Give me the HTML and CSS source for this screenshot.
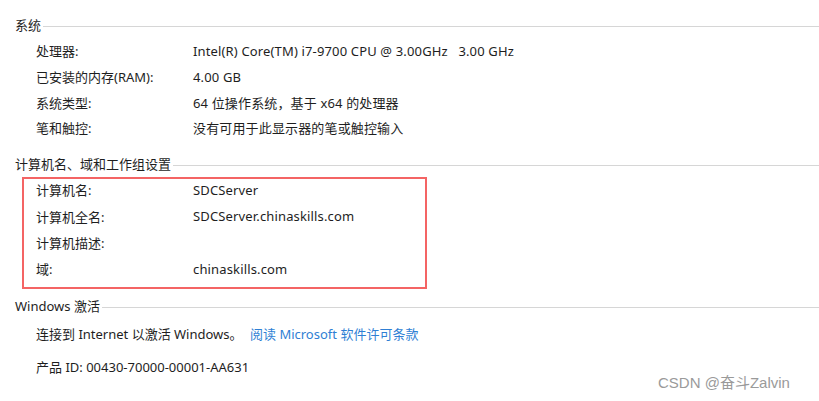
FILE: index.html
```html
<!DOCTYPE html>
<html lang="zh-CN">
<head>
<meta charset="utf-8">
<title>系统</title>
<link rel="stylesheet" href="styles.css">
</head>
<body>
<div class="page">
  <section class="group group-system">
    <div class="group-head"><span class="group-title">系统</span><span class="group-line"></span></div>
    <div class="rows">
      <div class="row"><span class="label">处理器:</span><span class="value">Intel(R) Core(TM) i7-9700 CPU @ 3.00GHz&nbsp;&nbsp;&nbsp;3.00 GHz</span></div>
      <div class="row"><span class="label">已安装的内存(RAM):</span><span class="value">4.00 GB</span></div>
      <div class="row"><span class="label">系统类型:</span><span class="value">64 位操作系统，基于 x64 的处理器</span></div>
      <div class="row"><span class="label">笔和触控:</span><span class="value">没有可用于此显示器的笔或触控输入</span></div>
    </div>
  </section>

  <section class="group group-computer">
    <div class="group-head"><span class="group-title">计算机名、域和工作组设置</span><span class="group-line"></span></div>
    <div class="rows rows-boxed">
      <div class="row"><span class="label">计算机名:</span><span class="value">SDCServer</span></div>
      <div class="row"><span class="label">计算机全名:</span><span class="value">SDCServer.chinaskills.com</span></div>
      <div class="row"><span class="label">计算机描述:</span><span class="value"></span></div>
      <div class="row"><span class="label">域:</span><span class="value">chinaskills.com</span></div>
    </div>
  </section>

  <section class="group group-activation">
    <div class="group-head"><span class="group-title">Windows 激活</span><span class="group-line"></span></div>
    <div class="act-rows">
      <div class="act-row"><span class="act-text">连接到 Internet 以激活 Windows。</span><span class="link">阅读 Microsoft 软件许可条款</span></div>
      <div class="act-row act-product">产品 ID: 00430-70000-00001-AA631</div>
    </div>
  </section>
</div>
<div class="watermark">CSDN @奋斗Zalvin</div>
</body>
</html>
```

FILE: styles.css
```css
html, body {
  margin: 0;
  padding: 0;
  background: #ffffff;
}

body {
  width: 819px;
  height: 401px;
  overflow: hidden;
  position: relative;
  font-family: "Noto Sans", "Noto Sans CJK SC", sans-serif;
  font-size: 13px;
  color: #1e1e1e;
}

.page {
  padding: 17px 0 0 15px;
}

.group-head {
  display: flex;
  align-items: center;
  height: 16px;
  line-height: 16px;
}

.group-title {
  white-space: nowrap;
}

.group-line {
  flex: 1;
  height: 1px;
  background: #d6d6d6;
  margin-left: 2px;
  margin-top: 3px;
}

.rows {
  display: flex;
  flex-direction: column;
  padding-left: 21px;
}

.group-system .rows {
  margin-top: 5px;
}

.row {
  display: flex;
  align-items: center;
  height: 25.7px;
  white-space: nowrap;
}

.value {
  letter-spacing: 0.15px;
}

.label {
  width: 157px;
  flex: none;
}

.group-computer {
  margin-top: 15px;
}

.rows-boxed {
  margin: 5px 0 0 7px;
  width: 389px;
  padding: 0 0 5px 12px;
  border: 2px solid #f46464;
}

.rows-boxed .row {
  height: 26.3px;
}

.rows-boxed .row:first-child {
  margin-top: -2px;
}

.group-activation {
  margin-top: 9px;
}

.act-rows {
  padding-left: 21px;
  margin-top: 12px;
}

.act-row {
  display: flex;
  height: 16px;
  line-height: 16px;
  white-space: nowrap;
}

.act-text {
  width: 214px;
  flex: none;
}

.link {
  color: #2f7fd4;
}

.act-product {
  margin-top: 17px;
}

.watermark {
  position: absolute;
  left: 658px;
  top: 374px;
  font-family: "Liberation Sans", "Noto Sans CJK SC", sans-serif;
  font-size: 15px;
  line-height: 18px;
  color: #9a9a9a;
  white-space: nowrap;
}
```
